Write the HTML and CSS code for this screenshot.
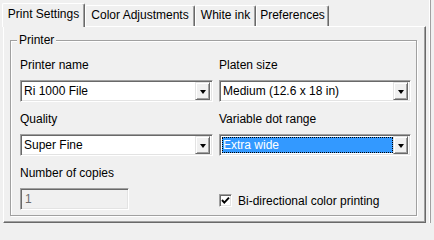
FILE: index.html
```html
<!DOCTYPE html>
<html>
<head>
<meta charset="utf-8">
<link rel="stylesheet" href="styles.css">
</head>
<body>
<div class="win">
  <div class="main">
    <div class="tabs">
      <div class="tab sel w1">Print Settings</div>
      <div class="tab w2">Color Adjustments</div>
      <div class="tab w3">White ink</div>
      <div class="tab w4">Preferences</div>
    </div>
    <div class="panel">
      <fieldset class="group">
        <legend class="legend">Printer</legend>
        <div class="grid">
          <div class="field">
            <div class="label">Printer name</div>
            <div class="combo">
              <div class="ctext">Ri 1000 File</div>
              <div class="cbtn"><span class="arrow"></span></div>
            </div>
          </div>
          <div class="field">
            <div class="label">Platen size</div>
            <div class="combo">
              <div class="ctext">Medium (12.6 x 18 in)</div>
              <div class="cbtn"><span class="arrow"></span></div>
            </div>
          </div>
          <div class="field">
            <div class="label">Quality</div>
            <div class="combo">
              <div class="ctext">Super Fine</div>
              <div class="cbtn"><span class="arrow"></span></div>
            </div>
          </div>
          <div class="field">
            <div class="label">Variable dot range</div>
            <div class="combo">
              <div class="ctext focus">Extra wide</div>
              <div class="cbtn"><span class="arrow"></span></div>
            </div>
          </div>
          <div class="field">
            <div class="label">Number of copies</div>
            <div class="input">1</div>
          </div>
          <div class="field endcell">
            <div class="cbrow">
              <span class="cbox"><svg width="9" height="9" viewBox="0 0 9 9"><polyline points="1,4 3.3,6.6 8,1.6" fill="none" stroke="#000" stroke-width="1.9"/></svg></span>
              <span class="cblabel">Bi-directional color printing</span>
            </div>
          </div>
        </div>
      </fieldset>
    </div>
  </div>
  <div class="edge"></div>
</div>
</body>
</html>
```
FILE: styles.css
```css
html, body {
  margin: 0;
  padding: 0;
  background: #f0f0f0;
}
.win {
  display: flex;
  width: 434px;
  height: 223px;
  overflow: hidden;
  background: #f0f0f0;
  font-family: "Liberation Sans", Arial, sans-serif;
  font-size: 12px;
  color: #000;
}
.main {
  width: 430px;
  flex: none;
}
.edge {
  flex: 1;
  border-left: 1px solid #a0a0a0;
  box-shadow: -1px 0 0 #fff;
}
.tabs {
  display: flex;
  align-items: flex-end;
  height: 26px;
  padding-left: 2px;
}
.tab {
  box-sizing: border-box;
  height: 21px;
  padding-top: 2px;
  line-height: 14px;
  text-align: center;
  border-top: 1px solid #fff;
  border-left: 1px solid #fff;
  border-right: 1px solid #696969;
  box-shadow: inset -1px 0 0 #a0a0a0;
  border-radius: 2px 2px 0 0;
  white-space: nowrap;
}
.tab.sel {
  height: 24px;
  padding-top: 3px;
  margin-bottom: -1px;
  position: relative;
  z-index: 1;
  background: #f0f0f0;
}
.w1 { width: 83px; }
.w2 { width: 110px; }
.w3 { width: 61px; }
.w4 { width: 73px; }
.panel {
  box-sizing: border-box;
  margin-left: 3px;
  width: 423px;
  height: 197px;
  border-style: solid;
  border-width: 1px;
  border-color: #fff #696969 #696969 #fff;
  box-shadow: inset -1px -1px 0 #a0a0a0;
  padding: 6px 0 0 6px;
}
.group {
  box-sizing: border-box;
  width: 407px;
  margin: 0;
  padding: 11px 5px 5px 9px;
  border: 1px solid #a0a0a0;
  box-shadow: 1px 1px 0 #fff, inset 1px 1px 0 #fff;
  min-inline-size: 0;
}
.legend {
  padding: 0 2px;
  margin-left: -3px;
  line-height: 14px;
  background: #f0f0f0;
}
.grid {
  display: grid;
  grid-template-columns: 193px 192px;
  column-gap: 6px;
  row-gap: 10px;
}
.field {
  display: flex;
  flex-direction: column;
}
.label {
  line-height: 14px;
  height: 14px;
  margin-bottom: 8px;
  white-space: nowrap;
}
.combo {
  box-sizing: border-box;
  display: flex;
  height: 22px;
  border: 1px solid;
  border-color: #a0a0a0 #fff #fff #a0a0a0;
  box-shadow: inset 1px 1px 0 #696969, inset -1px -1px 0 #e3e3e3;
  background: #fff;
  padding: 2px 2px 2px 2px;
}
.ctext {
  flex: 1;
  line-height: 16px;
  padding-left: 1px;
  white-space: nowrap;
  overflow: hidden;
}
.ctext.focus {
  background: #3399ff;
  color: #fff;
  outline: 1px dotted #000;
  outline-offset: -1px;
  margin-right: 0;
}
.cbtn {
  box-sizing: border-box;
  width: 15px;
  margin: -1px 0 -1px 0;
  background: #f0f0f0;
  border-style: solid;
  border-width: 1px;
  border-color: #e3e3e3 #696969 #696969 #e3e3e3;
  box-shadow: inset 1px 1px 0 #fff, inset -1px -1px 0 #a0a0a0;
  display: flex;
  align-items: center;
  justify-content: center;
}
.arrow {
  width: 0;
  height: 0;
  border-left: 3.5px solid transparent;
  border-right: 3.5px solid transparent;
  border-top: 4px solid #000;
  margin-top: 1px;
}
.input {
  box-sizing: border-box;
  width: 109px;
  height: 22px;
  border: 1px solid;
  border-color: #a0a0a0 #fff #fff #a0a0a0;
  box-shadow: inset 1px 1px 0 #696969, inset -1px -1px 0 #e3e3e3;
  background: #f0f0f0;
  color: #6d6d6d;
  padding: 2px 0 0 4px;
  line-height: 16px;
}
.endcell {
  justify-content: flex-end;
}
.cbrow {
  display: flex;
  align-items: center;
  height: 13px;
  margin-bottom: 3px;
}
.cbox {
  box-sizing: border-box;
  width: 13px;
  height: 13px;
  border: 1px solid;
  border-color: #a0a0a0 #fff #fff #a0a0a0;
  box-shadow: inset 1px 1px 0 #696969, inset -1px -1px 0 #e3e3e3;
  background: #fff;
  padding: 1px;
  display: flex;
}
.cbox svg {
  display: block;
}
.cblabel {
  margin-left: 6px;
  line-height: 14px;
  white-space: nowrap;
}
```
